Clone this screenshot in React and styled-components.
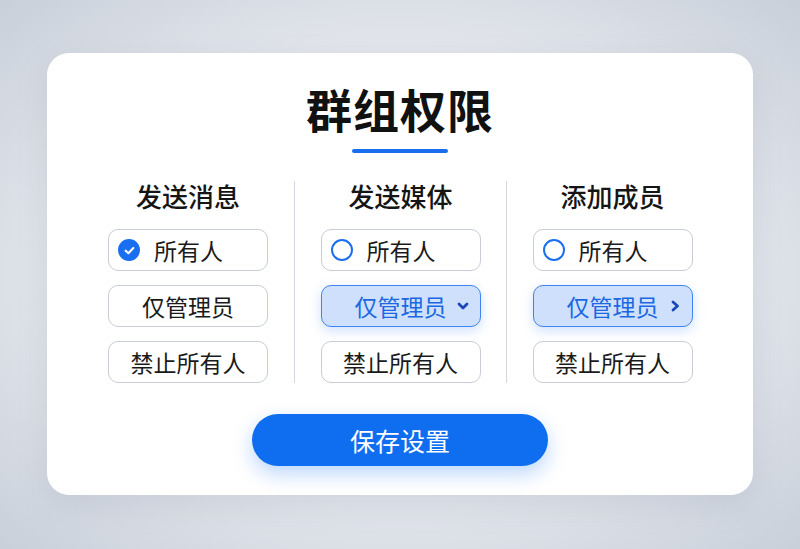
import styled, { createGlobalStyle } from 'styled-components';

const GlobalStyle = createGlobalStyle`
    html, body {
        margin: 0;
        padding: 0;
        width: 800px;
        height: 549px;
        overflow: hidden;
    }
    body {
        font-family: "Noto Sans CJK SC", "Noto Sans", sans-serif;
        background: radial-gradient(ellipse 70% 70% at 50% 50%, #f2f3f6 0%, #e2e5eb 60%, #c9d0da 100%);
    }
`;

const Page = styled.div`
    width: 800px;
    height: 549px;
    display: flex;
    align-items: flex-start;
    justify-content: center;
    padding-top: 53px;
    box-sizing: border-box;
`;

const Card = styled.div`
    width: 706px;
    height: 442px;
    background: #ffffff;
    border-radius: 22px;
    box-shadow: 0 10px 30px rgba(120, 135, 160, 0.18);
    box-sizing: border-box;
    padding: 24px 35px 0;
    display: flex;
    flex-direction: column;
    align-items: center;
`;

const Title = styled.h1`
    margin: 0;
    font-size: 46px;
    line-height: 62px;
    font-weight: 700;
    color: #111111;
    letter-spacing: 1px;
`;

const Underline = styled.div`
    width: 96px;
    height: 4px;
    border-radius: 2px;
    background: #1a6ef0;
    margin-top: 10px;
`;

const Columns = styled.div`
    width: 636px;
    display: grid;
    grid-template-columns: repeat(3, 1fr);
    margin-top: 28px;
`;

const Column = styled.div`
    display: flex;
    flex-direction: column;
    align-items: center;
    border-left: ${p => (p.$first ? 'none' : '1px solid #d3d8e2')};
`;

const Heading = styled.h2`
    margin: 0;
    font-size: 26px;
    line-height: 30px;
    font-weight: 500;
    color: #151515;
    margin-bottom: 18px;
`;

const Options = styled.div`
    display: flex;
    flex-direction: column;
    gap: 14px;
`;

const Option = styled.div`
    position: relative;
    width: 160px;
    height: 42px;
    box-sizing: border-box;
    border-radius: 10px;
    border: 1.5px solid ${p => (p.$active ? '#3f84f2' : '#c8ccd7')};
    background: ${p => (p.$active ? '#cfe0fc' : '#ffffff')};
    box-shadow: ${p => (p.$active ? '0 4px 12px rgba(58, 130, 242, 0.24)' : 'none')};
    color: ${p => (p.$active ? '#1b68e2' : '#1a1a1a')};
    font-size: 23px;
    display: flex;
    align-items: center;
    justify-content: ${p => (p.$radio ? 'flex-start' : 'center')};
    padding-left: ${p => (p.$radio ? '9px' : '0')};
    gap: 14px;
`;

const Radio = styled.span`
    width: 22px;
    height: 22px;
    border-radius: 50%;
    box-sizing: border-box;
    border: 2px solid #1a6ef0;
    background: ${p => (p.$checked ? '#1a6ef0' : '#ffffff')};
    display: flex;
    align-items: center;
    justify-content: center;
`;

const Chevron = styled.svg`
    position: absolute;
    right: 10px;
    top: 50%;
    transform: translateY(-50%);
`;

const SaveButton = styled.button`
    margin-top: 31px;
    width: 296px;
    height: 52px;
    border: none;
    border-radius: 26px;
    background: #0f6ef0;
    color: #ffffff;
    font-family: inherit;
    font-size: 25px;
    box-shadow: 0 8px 20px rgba(15, 110, 240, 0.28);
    cursor: pointer;
`;

const columns = [
    { title: '发送消息', value: 'all', chevron: null },
    { title: '发送媒体', value: 'admin', chevron: 'down' },
    { title: '添加成员', value: 'admin', chevron: 'right' },
];

const Check = () => (
    <svg width="13" height="13" viewBox="0 0 12 12">
        <path d="M2.5 6.2 L5 8.5 L9.5 3.8" fill="none" stroke="#fff" strokeWidth="2" strokeLinecap="round" strokeLinejoin="round" />
    </svg>
);

const ChevronIcon = ({ dir }) => (
    <Chevron width="14" height="14" viewBox="0 0 14 14">
        {dir === 'down'
            ? <path d="M3 5 L7 9 L11 5" fill="none" stroke="#1947b8" strokeWidth="2.8" strokeLinecap="round" strokeLinejoin="round" />
            : <path d="M5 3 L9.5 7 L5 11" fill="none" stroke="#1947b8" strokeWidth="2.8" strokeLinecap="round" strokeLinejoin="round" />}
    </Chevron>
);

const App = () => (
    <>
        <GlobalStyle />
        <Page>
            <Card>
                <Title>群组权限</Title>
                <Underline />
                <Columns>
                    {columns.map((col, i) => (
                        <Column key={col.title} $first={i === 0}>
                            <Heading>{col.title}</Heading>
                            <Options>
                                <Option $radio>
                                    <Radio $checked={col.value === 'all'}>
                                        {col.value === 'all' && <Check />}
                                    </Radio>
                                    所有人
                                </Option>
                                <Option $active={col.value === 'admin'}>
                                    仅管理员
                                    {col.chevron && <ChevronIcon dir={col.chevron} />}
                                </Option>
                                <Option>禁止所有人</Option>
                            </Options>
                        </Column>
                    ))}
                </Columns>
                <SaveButton>保存设置</SaveButton>
            </Card>
        </Page>
    </>
);

export default App;
